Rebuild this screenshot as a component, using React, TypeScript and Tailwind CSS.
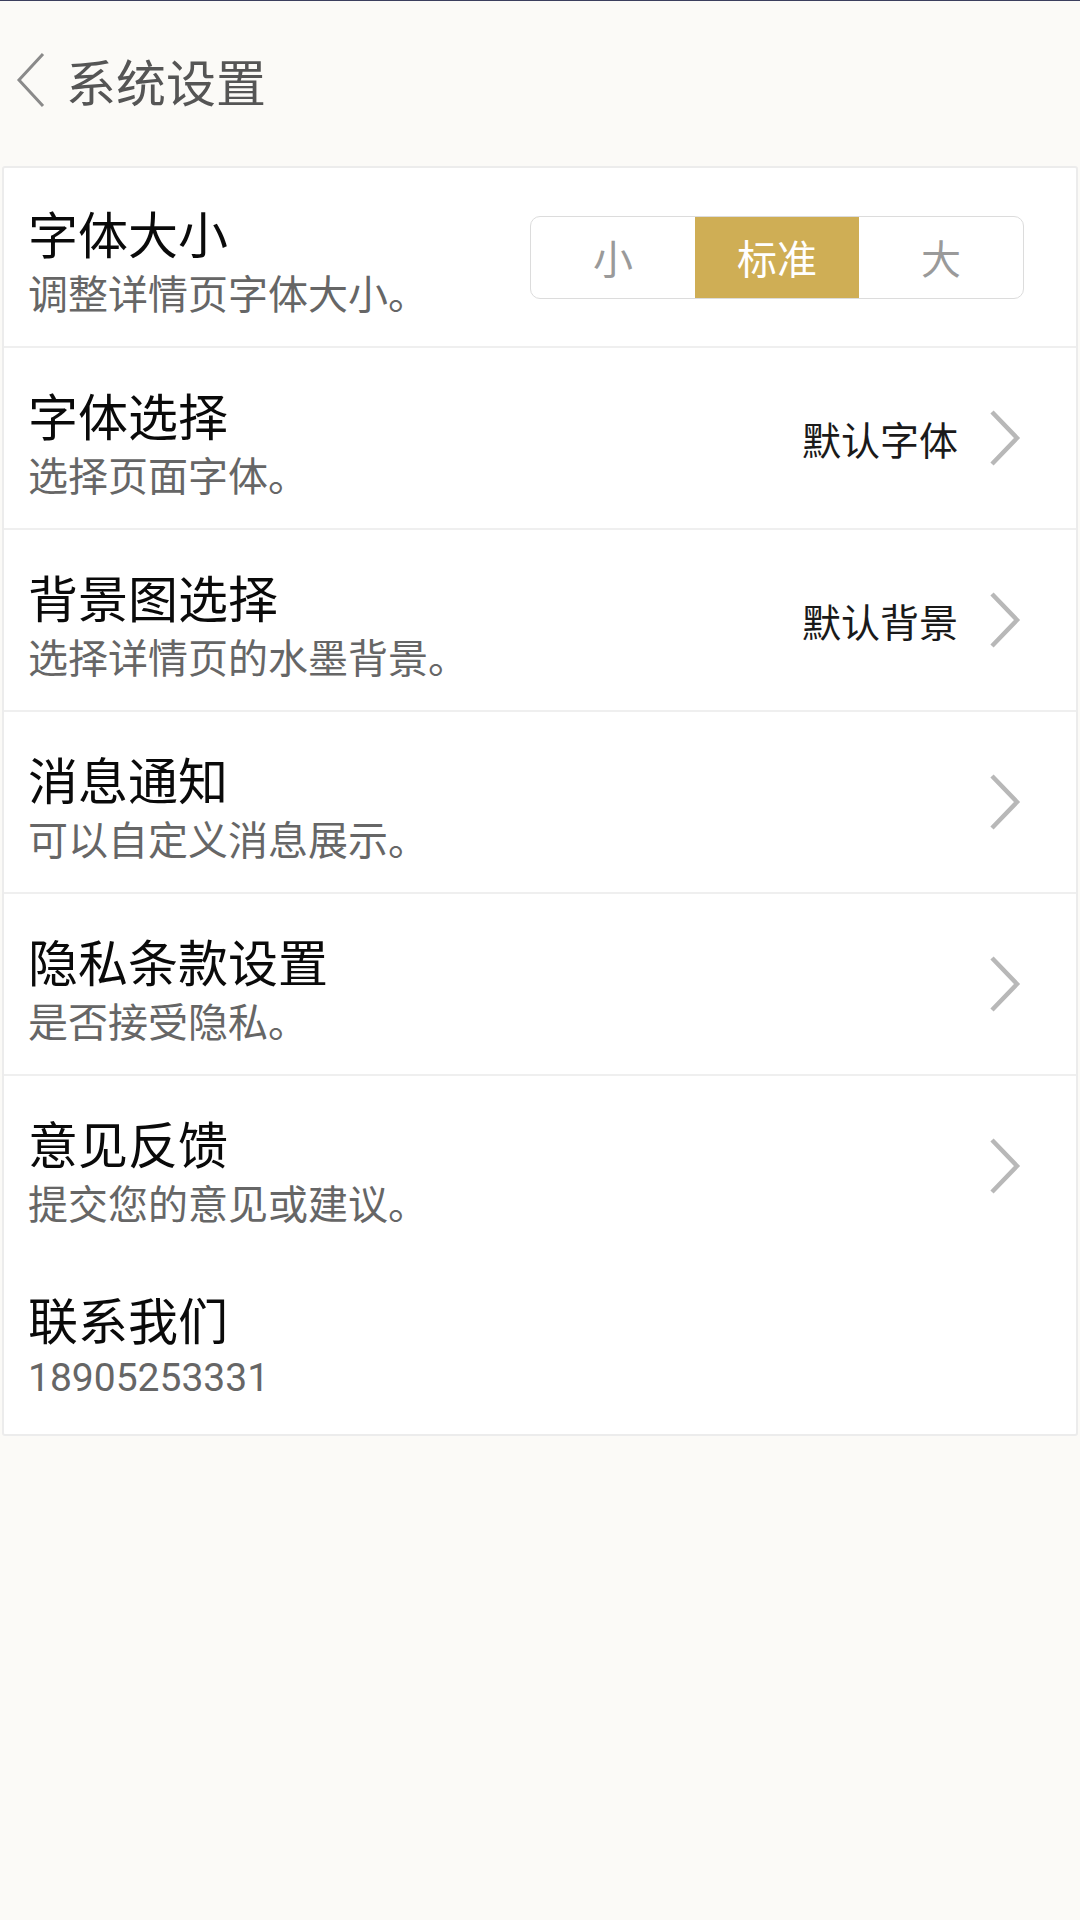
const rows = [
  { title: "字体选择", desc: "选择页面字体。", value: "默认字体", arrow: true },
  { title: "背景图选择", desc: "选择详情页的水墨背景。", value: "默认背景", arrow: true },
  { title: "消息通知", desc: "可以自定义消息展示。", value: "", arrow: true },
  { title: "隐私条款设置", desc: "是否接受隐私。", value: "", arrow: true },
  { title: "意见反馈", desc: "提交您的意见或建议。", value: "", arrow: true },
];

const BackIcon = () => (
  <svg width="30" height="56" viewBox="0 0 30 56" fill="none">
    <polyline points="27,2 3,28 27,54" stroke="#8a8a8a" strokeWidth="3" />
  </svg>
);

const ChevronIcon = () => (
  <svg width="34" height="58" viewBox="0 0 34 58" fill="none" className="blur-[0.6px]">
    <polyline points="4,3 29,29 4,55" stroke="#b8b8b8" strokeWidth="4.5" />
  </svg>
);

const FontSizeSwitch = () => (
  <div className="flex h-[83px] w-[494px] rounded-[10px] border-[1.5px] border-[#dcdcdc] overflow-hidden">
    <div className="flex-1 flex items-center justify-center text-[40px] text-[#9a9a9a]">小</div>
    <div className="flex-1 flex items-center justify-center text-[40px] text-white bg-[#cfae55] -my-[2px]">标准</div>
    <div className="flex-1 flex items-center justify-center text-[40px] text-[#9a9a9a]">大</div>
  </div>
);

const App = () => {
  return (
    <div
      className="min-h-[1920px] bg-[#fbfaf7] border-t border-[#3b3e5e]"
      style={{ fontFamily: '"Noto Sans CJK SC", Roboto, sans-serif' }}
    >
      {/* Header */}
      <header className="h-[165px] flex items-center pl-[16px] pb-[8px]">
        <BackIcon />
        <h1 className="ml-[20px] text-[50px] leading-none text-[#555555]">系统设置</h1>
      </header>

      {/* Settings card */}
      <div className="mx-[2px] bg-white border-[2px] border-[#ececec] rounded-[3px]">
        <div className="flex items-center justify-between h-[178px] pl-[24px] pr-[52px]">
          <div className="pt-[6px]">
            <div className="text-[50px] leading-[52px] text-[#0a0a0a]">字体大小</div>
            <div className="mt-[11px] text-[40px] leading-[46px] text-[#666666]">调整详情页字体大小。</div>
          </div>
          <FontSizeSwitch />
        </div>

        {rows.map((row) => (
          <div key={row.title} className="border-t-[2px] border-[#efefef] flex items-center justify-between h-[182px] pl-[24px] pr-[54px]">
            <div className="pt-[8px]">
              <div className="text-[50px] leading-[52px] text-[#0a0a0a]">{row.title}</div>
              <div className="mt-[11px] text-[40px] leading-[46px] text-[#666666]">{row.desc}</div>
            </div>
            <div className="flex items-center gap-[30px]">
              {row.value && <span className="text-[39px] text-[#1a1a1a]">{row.value}</span>}
              {row.arrow && <ChevronIcon />}
            </div>
          </div>
        ))}

        <div className="h-[178px] pl-[24px] pt-[36px]">
          <div className="text-[50px] leading-[52px] text-[#0a0a0a]">联系我们</div>
          <div className="mt-[11px] text-[39px] leading-[46px] text-[#666666]" style={{ fontFamily: "Roboto, sans-serif" }}>
            18905253331
          </div>
        </div>
      </div>
    </div>
  );
};

export default App;
